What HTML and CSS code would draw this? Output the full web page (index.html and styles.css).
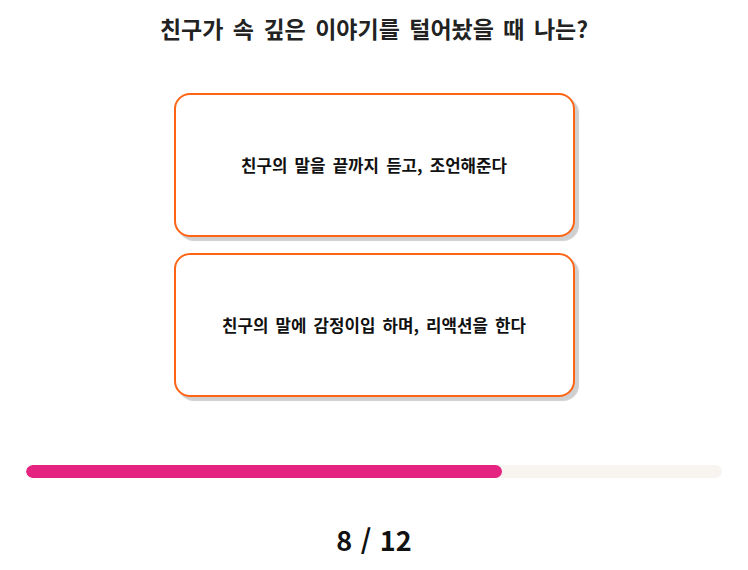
FILE: index.html
```html
<!DOCTYPE html>
<html lang="ko">
<head>
<meta charset="utf-8">
<link rel="stylesheet" href="styles.css">
</head>
<body>
<main class="quiz">
  <h1 class="question">친구가 속 깊은 이야기를 털어놨을 때 나는?</h1>
  <div class="answers">
    <button class="answer">친구의 말을 끝까지 듣고, 조언해준다</button>
    <button class="answer">친구의 말에 감정이입 하며, 리액션을 한다</button>
  </div>
  <div class="progress">
    <div class="progress-fill" style="width: 68.4%"></div>
  </div>
  <div class="count">8 / 12</div>
</main>
</body>
</html>
```
FILE: styles.css
```css
html, body {
  margin: 0;
  padding: 0;
  background: #ffffff;
}
body {
  font-family: "Noto Sans CJK KR", "Noto Sans", sans-serif;
  color: #111;
}
.quiz {
  width: 748px;
  display: flex;
  flex-direction: column;
  align-items: center;
}
.question {
  margin: 11px 0 0;
  font-size: 23px;
  line-height: 34px;
  word-spacing: 3px;
  font-weight: 700;
  color: #222;
}
.answers {
  margin-top: 48px;
  display: flex;
  flex-direction: column;
  gap: 16px;
}
.answer {
  width: 401px;
  height: 144px;
  box-sizing: border-box;
  border: 2px solid #ff6414;
  border-radius: 16px;
  background: #fff;
  box-shadow: 4px 4px 1px #cfcfcf;
  font-family: inherit;
  font-size: 16.8px;
  word-spacing: 2.5px;
  font-weight: 700;
  color: #111;
  padding: 0;
  cursor: pointer;
}
.progress {
  margin-top: 68px;
  width: 696px;
  height: 13px;
  border-radius: 7px;
  background: #f8f5f0;
  overflow: hidden;
}
.progress-fill {
  height: 100%;
  border-radius: 7px;
  background: #e42480;
}
.count {
  margin-top: 44px;
  font-size: 27px;
  line-height: 36px;
  word-spacing: 1px;
  font-weight: 700;
  color: #111;
}
```
